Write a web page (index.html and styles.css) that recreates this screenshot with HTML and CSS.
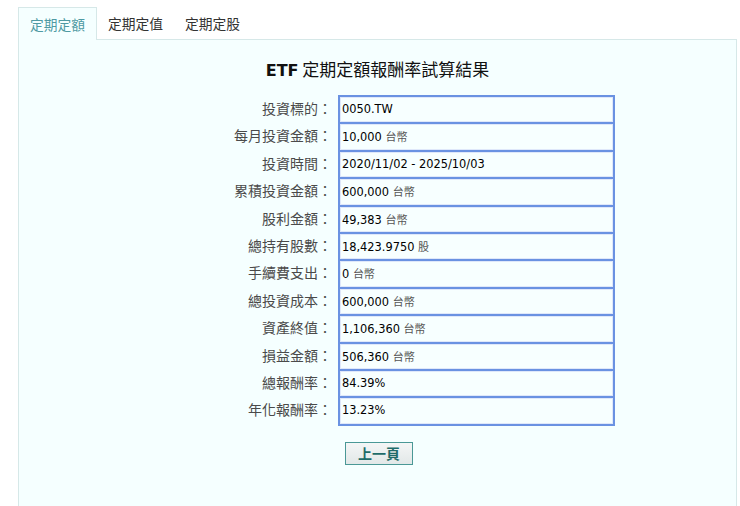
FILE: index.html
```html
<!DOCTYPE html>
<html lang="zh-Hant">
<head>
<meta charset="utf-8">
<title>ETF 定期定額報酬率試算結果</title>
<link rel="stylesheet" href="styles.css">
</head>
<body>
<div class="wrap">
  <div class="tabs">
    <div class="tab active">定期定額</div>
    <div class="tab">定期定值</div>
    <div class="tab">定期定股</div>
  </div>
  <div class="panel">
    <h1 class="title"><span class="etf">ETF</span> 定期定額報酬率試算結果</h1>
    <div class="result">
      <div class="label">投資標的：</div><div class="value">0050.TW</div>
      <div class="label">每月投資金額：</div><div class="value">10,000 <span class="unit">台幣</span></div>
      <div class="label">投資時間：</div><div class="value">2020/11/02 - 2025/10/03</div>
      <div class="label">累積投資金額：</div><div class="value">600,000 <span class="unit">台幣</span></div>
      <div class="label">股利金額：</div><div class="value">49,383 <span class="unit">台幣</span></div>
      <div class="label">總持有股數：</div><div class="value">18,423.9750 <span class="unit">股</span></div>
      <div class="label">手續費支出：</div><div class="value">0 <span class="unit">台幣</span></div>
      <div class="label">總投資成本：</div><div class="value">600,000 <span class="unit">台幣</span></div>
      <div class="label">資產終值：</div><div class="value">1,106,360 <span class="unit">台幣</span></div>
      <div class="label">損益金額：</div><div class="value">506,360 <span class="unit">台幣</span></div>
      <div class="label">總報酬率：</div><div class="value">84.39%</div>
      <div class="label">年化報酬率：</div><div class="value last">13.23%</div>
    </div>
    <div class="actions">
      <button class="back" type="button">上一頁</button>
    </div>
  </div>
</div>
</body>
</html>
```
FILE: styles.css
```css
html, body {
  margin: 0;
  padding: 0;
  background: #ffffff;
  font-family: "DejaVu Sans", "Noto Sans CJK TC", sans-serif;
  color: #222;
}

.wrap {
  padding: 7px 3px 0 18px;
}

.tabs {
  display: flex;
  height: 33px;
}

.tab {
  padding: 0 11px;
  line-height: 33px;
  font-size: 13.75px;
  color: #333;
  font-family: "Noto Sans CJK TC", sans-serif;
}

.tab.active {
  color: #4f9aa3;
  background: #f5ffff;
  border: 1px solid #d6e8e8;
  border-bottom: none;
  line-height: 32px;
  height: 33px;
  box-sizing: border-box;
  position: relative;
  z-index: 1;
}

.panel {
  border: 1px solid #d6e8e8;
  background: #f5ffff;
  height: 480px;
  margin-top: -1px;
  box-sizing: border-box;
  padding-top: 17px;
}

.title {
  margin: 0 0 12px 0;
  text-align: center;
  font-size: 17px;
  line-height: 24px;
  font-weight: normal;
  color: #111;
  font-family: "Noto Sans CJK TC", sans-serif;
}

.title .etf {
  font-family: "DejaVu Sans", sans-serif;
  font-weight: bold;
  font-size: 16px;
}

.result {
  display: grid;
  grid-template-columns: 198px 277px;
  grid-auto-rows: 27.4px;
  justify-content: center;
}

.label {
  text-align: right;
  padding-right: 6px;
  font-size: 14px;
  color: #4a4a4a;
  line-height: 27px;
  font-family: "Noto Sans CJK TC", sans-serif;
}

.value {
  border: 2px solid #6a92e2;
  border-bottom: none;
  box-shadow: inset 0 0 0 1px #dfe8fa;
  padding-left: 2px;
  font-size: 11.4px;
  line-height: 25px;
  color: #000;
  background: #f7ffff;
}

.value.last {
  border-bottom: 2px solid #6a92e2;
  height: 29.4px;
  box-sizing: border-box;
}

.unit {
  font-family: "Noto Sans CJK TC", sans-serif;
  font-size: 11px;
  color: #555;
}

.actions {
  display: flex;
  justify-content: center;
  margin-top: 18px;
}

.back {
  width: 68px;
  height: 23px;
  border: 1px solid #4a9896;
  background: linear-gradient(#f4f6f6, #e2e8e8);
  color: #1f6b69;
  font-family: "Noto Sans CJK TC", sans-serif;
  font-size: 14px;
  font-weight: bold;
  padding: 0;
  margin-left: 3px;
}
```
